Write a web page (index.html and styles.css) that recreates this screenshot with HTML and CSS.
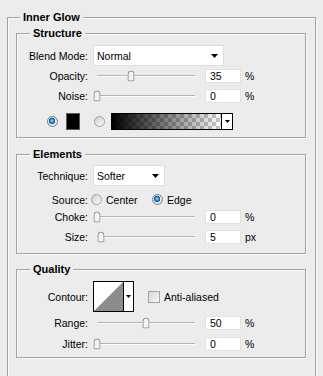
FILE: index.html
```html
<!DOCTYPE html>
<html>
<head>
<meta charset="utf-8">
<title>Inner Glow</title>
<link rel="stylesheet" href="styles.css">
</head>
<body>
<fieldset class="group outer">
  <legend class="title title-outer">Inner Glow</legend>

  <fieldset class="group sub structure">
    <legend class="title">Structure</legend>
    <div class="row row-select mt5">
      <span class="label">Blend Mode:</span>
      <div class="select select-blend"><span>Normal</span><svg class="arrow" width="7" height="4" viewBox="0 0 7 4"><path d="M0 0H7L3.5 4Z"/></svg></div>
    </div>
    <div class="row row-slider mt3">
      <span class="label">Opacity:</span>
      <div class="slider"><div class="track"><svg class="thumb" style="left:35%" width="7" height="11" viewBox="0 0 7 11"><path d="M0.5 9.5V3.5A3 3 0 0 1 6.5 3.5V9.5Q6.5 10.5 5.5 10.5H1.5Q0.5 10.5 0.5 9.5Z" fill="#f2f2f2" stroke="#8a8a8a"/></svg></div></div>
      <div class="num">35</div><span class="unit">%</span>
    </div>
    <div class="row row-slider mt6">
      <span class="label">Noise:</span>
      <div class="slider"><div class="track"><svg class="thumb" style="left:0%" width="7" height="11" viewBox="0 0 7 11"><path d="M0.5 9.5V3.5A3 3 0 0 1 6.5 3.5V9.5Q6.5 10.5 5.5 10.5H1.5Q0.5 10.5 0.5 9.5Z" fill="#f2f2f2" stroke="#8a8a8a"/></svg></div></div>
      <div class="num">0</div><span class="unit">%</span>
    </div>
    <div class="row row-color mt10">
      <span class="radio on"></span>
      <span class="swatch"></span>
      <span class="radio radio-grad"></span>
      <div class="gradient"><div class="gradient-fill"></div><div class="gradient-arrow"><svg class="arrow" width="5" height="3" viewBox="0 0 5 3"><path d="M0 0H5L2.5 3Z"/></svg></div></div>
    </div>
  </fieldset>

  <fieldset class="group sub elements">
    <legend class="title">Elements</legend>
    <div class="row row-select mt4">
      <span class="label">Technique:</span>
      <div class="select select-tech"><span>Softer</span><svg class="arrow" width="7" height="4" viewBox="0 0 7 4"><path d="M0 0H7L3.5 4Z"/></svg></div>
    </div>
    <div class="row row-source mt7">
      <span class="label label-tight">Source:</span>
      <label class="option option-first"><span class="radio"></span><span>Center</span></label>
      <label class="option"><span class="radio on"></span><span>Edge</span></label>
    </div>
    <div class="row row-slider mt4">
      <span class="label">Choke:</span>
      <div class="slider"><div class="track"><svg class="thumb" style="left:0%" width="7" height="11" viewBox="0 0 7 11"><path d="M0.5 9.5V3.5A3 3 0 0 1 6.5 3.5V9.5Q6.5 10.5 5.5 10.5H1.5Q0.5 10.5 0.5 9.5Z" fill="#f2f2f2" stroke="#8a8a8a"/></svg></div></div>
      <div class="num">0</div><span class="unit">%</span>
    </div>
    <div class="row row-slider mt6">
      <span class="label">Size:</span>
      <div class="slider"><div class="track"><svg class="thumb" style="left:4%" width="7" height="11" viewBox="0 0 7 11"><path d="M0.5 9.5V3.5A3 3 0 0 1 6.5 3.5V9.5Q6.5 10.5 5.5 10.5H1.5Q0.5 10.5 0.5 9.5Z" fill="#f2f2f2" stroke="#8a8a8a"/></svg></div></div>
      <div class="num">5</div><span class="unit">px</span>
    </div>
  </fieldset>

  <fieldset class="group sub quality">
    <legend class="title">Quality</legend>
    <div class="row row-contour mt5">
      <span class="label">Contour:</span>
      <div class="contour">
        <svg class="contour-curve" width="29" height="29" viewBox="0 0 29 29"><path d="M0 29L29 0V29Z" fill="#8c8c8c"/></svg>
        <div class="contour-arrow"><svg class="arrow" width="5" height="3" viewBox="0 0 5 3"><path d="M0 0H5L2.5 3Z"/></svg></div>
      </div>
      <span class="checkbox"></span>
      <span class="check-label">Anti-aliased</span>
    </div>
    <div class="row row-slider mt4">
      <span class="label">Range:</span>
      <div class="slider"><div class="track"><svg class="thumb" style="left:50%" width="7" height="11" viewBox="0 0 7 11"><path d="M0.5 9.5V3.5A3 3 0 0 1 6.5 3.5V9.5Q6.5 10.5 5.5 10.5H1.5Q0.5 10.5 0.5 9.5Z" fill="#f2f2f2" stroke="#8a8a8a"/></svg></div></div>
      <div class="num">50</div><span class="unit">%</span>
    </div>
    <div class="row row-slider mt7">
      <span class="label">Jitter:</span>
      <div class="slider"><div class="track"><svg class="thumb" style="left:0%" width="7" height="11" viewBox="0 0 7 11"><path d="M0.5 9.5V3.5A3 3 0 0 1 6.5 3.5V9.5Q6.5 10.5 5.5 10.5H1.5Q0.5 10.5 0.5 9.5Z" fill="#f2f2f2" stroke="#8a8a8a"/></svg></div></div>
      <div class="num">0</div><span class="unit">%</span>
    </div>
  </fieldset>
</fieldset>
</body>
</html>
```

FILE: styles.css
```css
html, body {
  margin: 0;
  padding: 0;
  overflow: hidden;
}

body {
  width: 323px;
  height: 376px;
  background: #ececec;
  font-family: "Liberation Sans", Arial, sans-serif;
  font-size: 10.5px;
  color: #000;
}

.group {
  margin: 0;
  padding: 0;
  min-width: 0;
  border: 1px solid #a2a2a2;
  box-shadow: inset 1px 1px 0 #fafafa, 1px 1px 0 #fafafa;
}

.title {
  font-weight: bold;
  font-size: 11px;
  line-height: 13px;
  padding: 0 3px;
  margin-left: 13px;
  background: #ececec;
}

.title-outer {
  margin-left: 12px;
}

.outer {
  margin: 11px 7px 0 7px;
  padding-bottom: 60px;
}

.sub {
  margin-left: 8px;
  margin-right: 9px;
}

.structure {
  margin-top: 3px;
  padding-bottom: 7px;
}

.elements {
  margin-top: 10px;
  padding-bottom: 9px;
}

.quality {
  margin-top: 9px;
  padding-bottom: 6px;
}

.row {
  display: flex;
  align-items: center;
}

.mt3 { margin-top: 3px; }
.mt4 { margin-top: 4px; }
.mt5 { margin-top: 5px; }
.mt6 { margin-top: 6px; }
.mt7 { margin-top: 7px; }
.mt10 { margin-top: 10px; }

.label {
  flex: none;
  width: 71px;
  margin-right: 5px;
  text-align: right;
  white-space: nowrap;
}

.label-tight {
  margin-right: 3px;
}

.row-select { height: 21px; }
.row-slider { height: 14px; }
.row-color { height: 17px; padding-left: 30px; }
.row-source { height: 13px; }
.row-contour { height: 31px; }

.select {
  box-sizing: border-box;
  height: 21px;
  display: flex;
  align-items: center;
  padding: 0 5px 0 3px;
  background: #fff;
  border: 1px solid #dedede;
}

.select .arrow {
  margin-left: auto;
}

.select-blend { width: 131px; }
.select-tech { width: 72px; }

.slider {
  flex: none;
  box-sizing: border-box;
  width: 106px;
  height: 14px;
  padding: 0 4px;
  display: flex;
  align-items: center;
}

.track {
  position: relative;
  flex: 1;
  height: 2px;
  background: linear-gradient(#b4b4b4 50%, #fbfbfb 50%);
}

.thumb {
  position: absolute;
  top: 1px;
  transform: translate(-50%, -50%);
  display: block;
}

.num {
  flex: none;
  box-sizing: border-box;
  width: 36px;
  height: 14px;
  margin-left: 6px;
  padding-left: 4px;
  line-height: 12px;
  background: #fff;
  border: 1px solid #e2e2e2;
}

.unit {
  margin-left: 4px;
}

.radio {
  flex: none;
  display: inline-block;
  box-sizing: border-box;
  width: 11px;
  height: 11px;
  border-radius: 50%;
  border: 1px solid #a0a0a0;
  background: linear-gradient(135deg, #cfcfcf, #fbfbfb);
}

.radio.on {
  border-color: #71808c;
  background: radial-gradient(circle at 45% 42%, #b8ecff 0, #3a97cc 1.4px, #175a8a 3px, #dfe6eb 3.4px);
}

.swatch {
  flex: none;
  box-sizing: border-box;
  width: 14px;
  height: 17px;
  margin-left: 8px;
  background: #000;
  border: 1px solid #5a5a5a;
}

.radio-grad {
  margin-left: 14px;
}

.gradient {
  flex: none;
  box-sizing: border-box;
  width: 122px;
  height: 17px;
  margin-left: 6px;
  display: flex;
  border: 1px solid #000;
}

.gradient-fill {
  flex: 1;
  background:
    linear-gradient(to right, #000, rgba(0, 0, 0, 0)),
    conic-gradient(#c8c8c8 25%, #fff 0 50%, #c8c8c8 0 75%, #fff 0) 0 0 / 8px 8px;
}

.gradient-arrow {
  flex: none;
  width: 10px;
  display: flex;
  align-items: center;
  justify-content: center;
  background: #fff;
  border-left: 1px solid #000;
}

.option {
  display: flex;
  align-items: center;
  gap: 4px;
}

.option-first {
  width: 61px;
}

.contour {
  flex: none;
  box-sizing: border-box;
  width: 41px;
  height: 31px;
  display: flex;
  background: #fff;
  border: 1px solid #000;
}

.contour-curve {
  display: block;
  flex: none;
}

.contour-arrow {
  flex: 1;
  display: flex;
  align-items: center;
  justify-content: center;
  border-left: 1px solid #000;
}

.checkbox {
  flex: none;
  box-sizing: border-box;
  width: 12px;
  height: 12px;
  margin-left: 14px;
  border: 1px solid #a4a4a4;
  background: linear-gradient(135deg, #d6d6d6, #f7f7f7);
}

.check-label {
  margin-left: 4px;
}

.arrow {
  display: block;
  flex: none;
}
```
